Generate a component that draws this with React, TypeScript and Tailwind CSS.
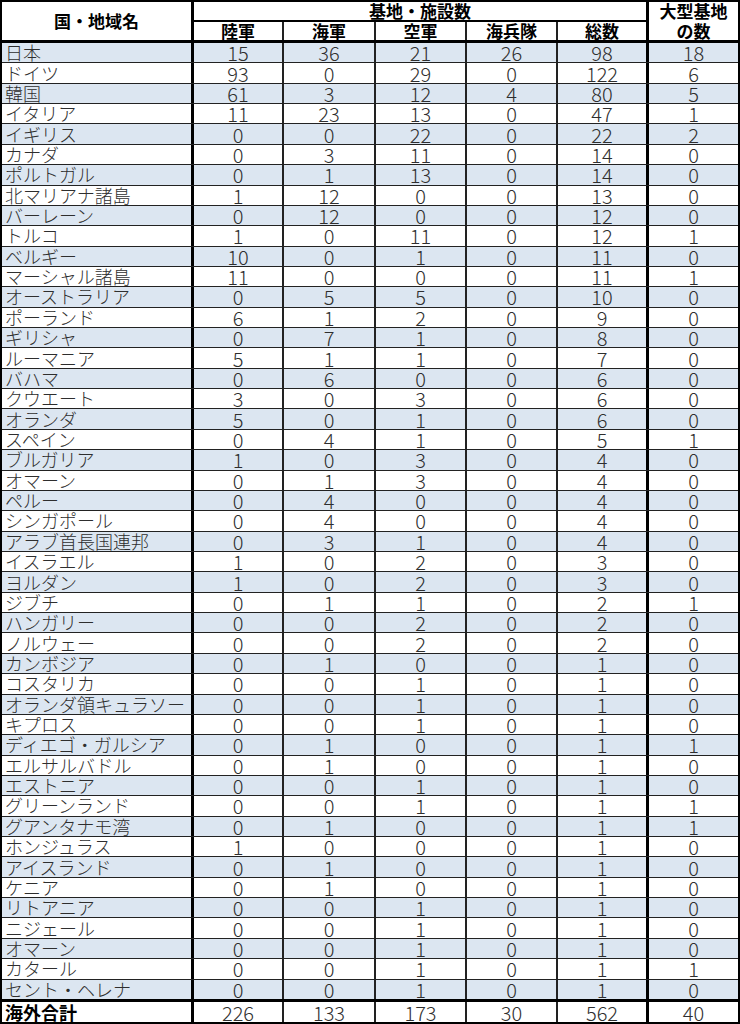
const rows: [string, number, number, number, number, number, number][] = [
  ["日本", 15, 36, 21, 26, 98, 18],
  ["ドイツ", 93, 0, 29, 0, 122, 6],
  ["韓国", 61, 3, 12, 4, 80, 5],
  ["イタリア", 11, 23, 13, 0, 47, 1],
  ["イギリス", 0, 0, 22, 0, 22, 2],
  ["カナダ", 0, 3, 11, 0, 14, 0],
  ["ポルトガル", 0, 1, 13, 0, 14, 0],
  ["北マリアナ諸島", 1, 12, 0, 0, 13, 0],
  ["バーレーン", 0, 12, 0, 0, 12, 0],
  ["トルコ", 1, 0, 11, 0, 12, 1],
  ["ベルギー", 10, 0, 1, 0, 11, 0],
  ["マーシャル諸島", 11, 0, 0, 0, 11, 1],
  ["オーストラリア", 0, 5, 5, 0, 10, 0],
  ["ポーランド", 6, 1, 2, 0, 9, 0],
  ["ギリシャ", 0, 7, 1, 0, 8, 0],
  ["ルーマニア", 5, 1, 1, 0, 7, 0],
  ["バハマ", 0, 6, 0, 0, 6, 0],
  ["クウエート", 3, 0, 3, 0, 6, 0],
  ["オランダ", 5, 0, 1, 0, 6, 0],
  ["スペイン", 0, 4, 1, 0, 5, 1],
  ["ブルガリア", 1, 0, 3, 0, 4, 0],
  ["オマーン", 0, 1, 3, 0, 4, 0],
  ["ペルー", 0, 4, 0, 0, 4, 0],
  ["シンガポール", 0, 4, 0, 0, 4, 0],
  ["アラブ首長国連邦", 0, 3, 1, 0, 4, 0],
  ["イスラエル", 1, 0, 2, 0, 3, 0],
  ["ヨルダン", 1, 0, 2, 0, 3, 0],
  ["ジブチ", 0, 1, 1, 0, 2, 1],
  ["ハンガリー", 0, 0, 2, 0, 2, 0],
  ["ノルウェー", 0, 0, 2, 0, 2, 0],
  ["カンボジア", 0, 1, 0, 0, 1, 0],
  ["コスタリカ", 0, 0, 1, 0, 1, 0],
  ["オランダ領キュラソー", 0, 0, 1, 0, 1, 0],
  ["キプロス", 0, 0, 1, 0, 1, 0],
  ["ディエゴ・ガルシア", 0, 1, 0, 0, 1, 1],
  ["エルサルバドル", 0, 1, 0, 0, 1, 0],
  ["エストニア", 0, 0, 1, 0, 1, 0],
  ["グリーンランド", 0, 0, 1, 0, 1, 1],
  ["グアンタナモ湾", 0, 1, 0, 0, 1, 1],
  ["ホンジュラス", 1, 0, 0, 0, 1, 0],
  ["アイスランド", 0, 1, 0, 0, 1, 0],
  ["ケニア", 0, 1, 0, 0, 1, 0],
  ["リトアニア", 0, 0, 1, 0, 1, 0],
  ["ニジェール", 0, 0, 1, 0, 1, 0],
  ["オマーン", 0, 0, 1, 0, 1, 0],
  ["カタール", 0, 0, 1, 0, 1, 1],
  ["セント・ヘレナ", 0, 0, 1, 0, 1, 0],
];

const cols = "grid grid-cols-[189px_91px_92px_91px_91px_90px_92px]";

function NumCells({ vals }: { vals: number[] }) {
  return (
    <>
      <div className="flex items-center justify-center border-l-[3px] border-black">{vals[0]}</div>
      <div className="flex items-center justify-center border-l-2 border-[#222]">{vals[1]}</div>
      <div className="flex items-center justify-center border-l-2 border-[#222]">{vals[2]}</div>
      <div className="flex items-center justify-center border-l-2 border-[#222]">{vals[3]}</div>
      <div className="flex items-center justify-center border-l-2 border-[#222]">{vals[4]}</div>
      <div className="flex items-center justify-center border-l-[3px] border-black">{vals[5]}</div>
    </>
  );
}

export default function App() {
  return (
    <div
      className="flex h-[1024px] w-[740px] flex-col border-2 border-black bg-white text-[#2e2e2e]"
      style={{ fontFamily: '"Noto Sans CJK JP", "Noto Sans", sans-serif' }}
    >
      <header className={`${cols} h-[41px] shrink-0 grid-rows-[20px_18px] border-b-[3px] border-black text-[17px] font-bold leading-[18px] text-black`}>
        <div className="row-span-2 flex items-center justify-center">国・地域名</div>
        <div className="col-span-5 flex items-center justify-center border-b-2 border-l-[3px] border-black">基地・施設数</div>
        <div className="row-span-2 flex flex-col items-center justify-center border-l-[3px] border-black">
          <span>大型基地</span>
          <span className="mt-[2px]">の数</span>
        </div>
        <div className="flex items-center justify-center border-l-[3px] border-black">陸軍</div>
        <div className="flex items-center justify-center border-l-2 border-[#222]">海軍</div>
        <div className="flex items-center justify-center border-l-2 border-[#222]">空軍</div>
        <div className="flex items-center justify-center border-l-2 border-[#222]">海兵隊</div>
        <div className="flex items-center justify-center border-l-2 border-[#222]">総数</div>
      </header>

      <main className="flex flex-1 flex-col border-b-[3px] border-black font-light leading-[19px]">
        {rows.map(([name, ...vals], i) => (
          <div
            key={i}
            className={`${cols} flex-1 text-[20px] ${i < rows.length - 1 ? "border-b border-[#222]" : ""} ${i % 2 === 0 ? "bg-[#dce6f1]" : "bg-white"}`}
          >
            <div className="flex items-center whitespace-nowrap pl-[3px] text-[18px]">{name}</div>
            <NumCells vals={vals} />
          </div>
        ))}
      </main>

      <footer className={`${cols} h-[20px] shrink-0 text-[20px] font-light leading-[19px]`}>
        <div className="flex items-center pl-[3px] text-[18px] font-bold text-black">海外合計</div>
        <NumCells vals={[226, 133, 173, 30, 562, 40]} />
      </footer>
    </div>
  );
}
